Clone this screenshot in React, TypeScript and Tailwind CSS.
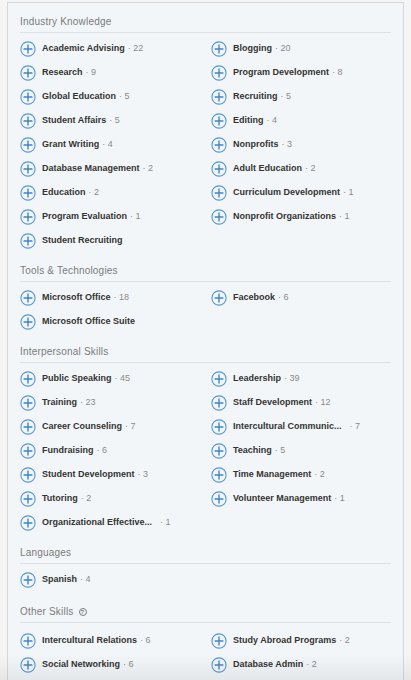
type Skill = {
  name: string
  count?: number
  cut?: boolean
}

type Section = {
  title: string
  help?: boolean
  skills: Skill[]
}

const sections: Section[] = [
  {
    title: 'Industry Knowledge',
    skills: [
      { name: 'Academic Advising', count: 22 },
      { name: 'Blogging', count: 20 },
      { name: 'Research', count: 9 },
      { name: 'Program Development', count: 8 },
      { name: 'Global Education', count: 5 },
      { name: 'Recruiting', count: 5 },
      { name: 'Student Affairs', count: 5 },
      { name: 'Editing', count: 4 },
      { name: 'Grant Writing', count: 4 },
      { name: 'Nonprofits', count: 3 },
      { name: 'Database Management', count: 2 },
      { name: 'Adult Education', count: 2 },
      { name: 'Education', count: 2 },
      { name: 'Curriculum Development', count: 1 },
      { name: 'Program Evaluation', count: 1 },
      { name: 'Nonprofit Organizations', count: 1 },
      { name: 'Student Recruiting' },
    ],
  },
  {
    title: 'Tools & Technologies',
    skills: [
      { name: 'Microsoft Office', count: 18 },
      { name: 'Facebook', count: 6 },
      { name: 'Microsoft Office Suite' },
    ],
  },
  {
    title: 'Interpersonal Skills',
    skills: [
      { name: 'Public Speaking', count: 45 },
      { name: 'Leadership', count: 39 },
      { name: 'Training', count: 23 },
      { name: 'Staff Development', count: 12 },
      { name: 'Career Counseling', count: 7 },
      { name: 'Intercultural Communic...', count: 7, cut: true },
      { name: 'Fundraising', count: 6 },
      { name: 'Teaching', count: 5 },
      { name: 'Student Development', count: 3 },
      { name: 'Time Management', count: 2 },
      { name: 'Tutoring', count: 2 },
      { name: 'Volunteer Management', count: 1 },
      { name: 'Organizational Effective...', count: 1, cut: true },
    ],
  },
  {
    title: 'Languages',
    skills: [{ name: 'Spanish', count: 4 }],
  },
  {
    title: 'Other Skills',
    help: true,
    skills: [
      { name: 'Intercultural Relations', count: 6 },
      { name: 'Study Abroad Programs', count: 2 },
      { name: 'Social Networking', count: 6 },
      { name: 'Database Admin', count: 2 },
      { name: 'Event Planning', count: 2 },
      { name: 'Higher Education', count: 1 },
    ],
  },
]

function PlusIcon() {
  return (
    <svg width="16" height="16" viewBox="0 0 16 16" className="shrink-0">
      <circle cx="8" cy="8" r="7.1" fill="none" stroke="#5596d2" strokeWidth="1.1" />
      <path d="M8 3.6v8.8M3.6 8h8.8" stroke="#3f86c9" strokeWidth="1.4" />
    </svg>
  )
}

function SkillRow({ skill }: { skill: Skill }) {
  return (
    <div className="flex h-[24px] items-center">
      <PlusIcon />
      <span className="ml-[6px] whitespace-nowrap text-[9px] font-bold text-[#333333]">
        {skill.name}
      </span>
      {skill.count !== undefined ? (
        <span
          className={`${skill.cut ? 'ml-[8px]' : 'ml-[3px]'} whitespace-nowrap text-[9px] text-[#8a8a8a]`}
        >
          · {skill.count}
        </span>
      ) : null}
    </div>
  )
}

export default function App() {
  return (
    <div
      className="relative flex h-[680px] w-[411px] overflow-hidden bg-[#f5f5f5] pt-[2px]"
      style={{ fontFamily: '"Liberation Sans", Arial, sans-serif' }}
    >
      <div className="ml-[7px] w-[397px] shrink-0 border-x border-t border-[#d6d9dc] bg-[#f3f6f8] px-[12px] pt-[13px]">
        {sections.map((section) => (
          <section key={section.title} className={`mb-[12px] ${section.help ? 'pt-[1px]' : ''}`}>
            <div
              className={`flex items-center border-b border-[#dde1e4] pb-[4px] text-[10px] tracking-[0.2px] text-[#7a7a7a] ${
                section.help ? 'h-[18px]' : 'h-[17px] leading-[12px]'
              }`}
            >
              {section.title}
              {section.help ? (
                <span className="ml-[5px] flex h-[8px] w-[8px] items-center justify-center rounded-full border border-[#7a7a7a] text-[6px] font-bold leading-none text-[#7a7a7a]">
                  ?
                </span>
              ) : null}
            </div>
            <div className={`${section.help ? 'mt-[6px]' : 'mt-[4px]'} grid grid-cols-[191px_1fr]`}>
              {section.skills.map((skill) => (
                <SkillRow key={skill.name} skill={skill} />
              ))}
            </div>
          </section>
        ))}
      </div>
      <div className="pointer-events-none absolute inset-x-0 bottom-0 h-[26px] bg-gradient-to-b from-transparent to-[#00000010]" />
    </div>
  )
}
